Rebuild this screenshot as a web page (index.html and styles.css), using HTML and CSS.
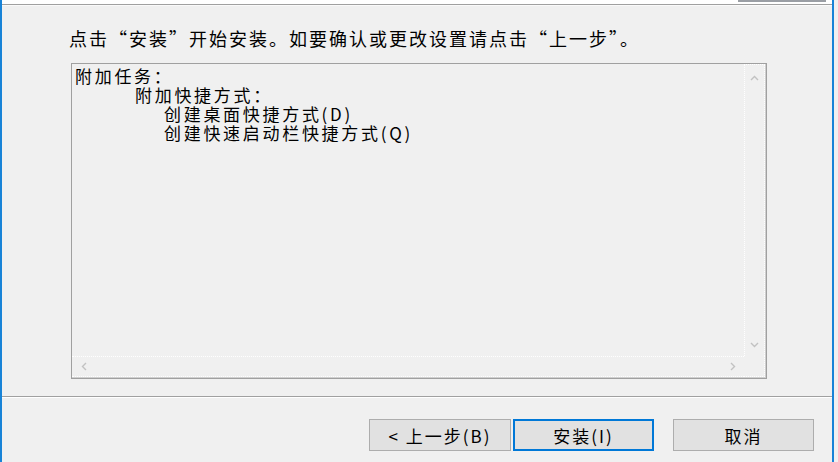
FILE: index.html
```html
<!DOCTYPE html>
<html lang="zh-CN">
<head>
    <meta charset="UTF-8">
    <meta name="viewport" content="width=device-width, initial-scale=1.0">
    <title>安装</title>
    <link rel="stylesheet" href="styles.css">
</head>
<body>
<div class="window">
    <div class="top-bar"><span class="top-btn"></span></div>

    <div class="page">
        <p class="intro">点击“安装”开始安装。如要确认或更改设置请点击“上一步”。</p>

        <div class="memo">
            <div class="memo-text">
                <div class="line">附加任务：</div>
                <div class="line lvl2">附加快捷方式：</div>
                <div class="line lvl3">创建桌面快捷方式(D)</div>
                <div class="line lvl3">创建快速启动栏快捷方式(Q)</div>
            </div>
            <div class="vscroll">
                <svg class="arrow arrow-up" width="9" height="6" viewBox="0 0 9 6"><path d="M1 5 L4.5 1.5 L8 5" fill="none" stroke="#c2c2c2" stroke-width="1.4"/></svg>
                <svg class="arrow arrow-down" width="9" height="6" viewBox="0 0 9 6"><path d="M1 1 L4.5 4.5 L8 1" fill="none" stroke="#c2c2c2" stroke-width="1.4"/></svg>
            </div>
            <div class="hscroll">
                <svg class="arrow" width="6" height="9" viewBox="0 0 6 9"><path d="M5 1 L1.5 4.5 L5 8" fill="none" stroke="#c2c2c2" stroke-width="1.4"/></svg>
                <svg class="arrow" width="6" height="9" viewBox="0 0 6 9"><path d="M1 1 L4.5 4.5 L1 8" fill="none" stroke="#c2c2c2" stroke-width="1.4"/></svg>
            </div>
            <div class="corner"></div>
        </div>
    </div>

    <div class="footer">
        <button class="btn">&lt; 上一步(B)</button>
        <button class="btn btn-default">安装(I)</button>
        <button class="btn btn-cancel">取消</button>
    </div>
</div>
</body>
</html>
```

FILE: styles.css
```css
body {
    margin: 0;
    background: #f0f0f0;
    font-family: "Noto Sans CJK SC", "Noto Sans", sans-serif;
    color: #000;
}
.window {
    width: 834px;
    height: 462px;
    box-sizing: border-box;
    border-left: 2px solid #1883d7;
    border-right: 2px solid #1883d7;
    display: flex;
    flex-direction: column;
}
.top-bar {
    height: 4px;
    background: #fff;
    border-bottom: 1px solid #a0a0a0;
    box-shadow: 0 1px 0 #fafafa;
    display: flex;
    justify-content: flex-end;
}
.top-btn {
    width: 88px;
    height: 2px;
    margin-right: 6px;
    background: #9a9ea4;
}
.page {
    height: 391px;
    padding-left: 67px;
}
.intro {
    margin: 21px 0 13px 0;
    font-size: 18px;
    line-height: 24px;
    letter-spacing: 2px;
}
.memo {
    margin-left: 2px;
    width: 696px;
    height: 316px;
    box-sizing: border-box;
    border: 1px solid #a0a0a0;
    box-shadow: inset -1px -1px 0 #d0d0d0;
    display: grid;
    grid-template-columns: 1fr 21px;
    grid-template-rows: 1fr 21px;
    padding: 0 1px 1px 0;
}
.memo-text {
    padding: 2px 0 0 3px;
    font-size: 17px;
    line-height: 19px;
    letter-spacing: 2.7px;
    white-space: nowrap;
    overflow: hidden;
}
.lvl2 { padding-left: 60px; }
.lvl3 { padding-left: 89px; }
.vscroll {
    border-left: 1px dotted #fff;
    border-right: 1px dotted #fff;
    border-top: 1px dotted #fff;
    display: flex;
    flex-direction: column;
    align-items: center;
    justify-content: space-between;
    padding: 10px 0 8px;
}
.hscroll {
    border-top: 1px dotted #fff;
    border-bottom: 1px dotted #fff;
    display: flex;
    align-items: center;
    justify-content: space-between;
    padding: 0 8px 0 9px;
}
.corner {
    border-bottom: 1px dotted #fff;
    border-right: 1px dotted #fff;
}
.arrow { display: block; }
.footer {
    flex: 1;
    border-top: 1px solid #a0a0a0;
    box-shadow: inset 0 1px 0 #fff;
    display: flex;
    justify-content: flex-end;
    align-items: flex-start;
    padding: 22px 18px 0 0;
}
.btn {
    width: 141px;
    height: 32px;
    box-sizing: border-box;
    background: #e1e1e1;
    border: 1px solid #adadad;
    font-family: "Noto Sans CJK SC", "Noto Sans", sans-serif;
    font-size: 17px;
    letter-spacing: 2px;
    color: #000;
    padding: 0;
}
.btn:first-child {
    width: 142px;
    margin-right: 2px;
}
.btn-default {
    border: 2px solid #0078d7;
}
.btn-cancel {
    margin-left: 19px;
}
```
